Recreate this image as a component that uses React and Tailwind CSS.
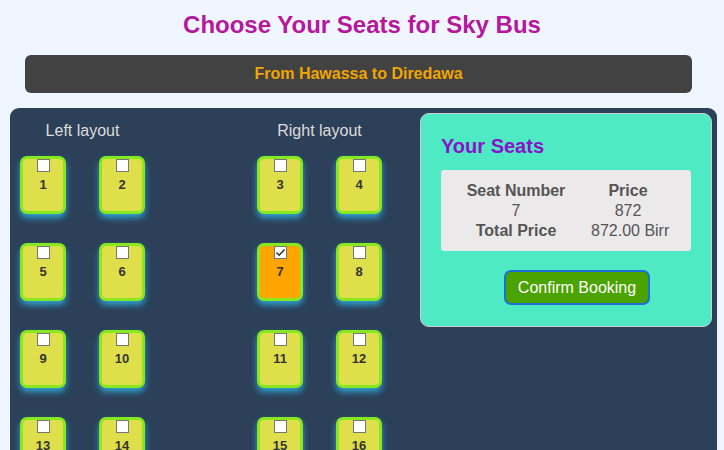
import React from "react";

const rows = [
  [1, 2, 3, 4],
  [5, 6, 7, 8],
  [9, 10, 11, 12],
  [13, 14, 15, 16],
];

// single seat card
const Seat = ({ num, selected }) => (
  <div
    className={`flex h-[58px] w-[46px] flex-col items-center rounded-[7px] border-[3px] border-[#86e81e] shadow-[0_4px_6px_rgba(47,170,220,0.9)] ${
      selected ? "bg-[#ffa500]" : "bg-[#dfdf4c]"
    }`}
  >
    <div className="flex h-[13px] w-[13px] items-center justify-center border border-[#767676] bg-white">
      {selected && (
        <svg width="11" height="11" viewBox="0 0 11 11">
          <path d="M1.5 5.5 L4.2 8.2 L9.5 2.5" fill="none" stroke="#333" strokeWidth="1.5" />
        </svg>
      )}
    </div>
    <span className="mt-[5px] text-[13px] font-bold leading-[16px] text-[#333]">{num}</span>
  </div>
);

const SeatGroup = ({ label, cols, selected }) => (
  <div className="flex w-[125px] flex-col items-center">
    <div className="text-[16px] leading-[18px] text-[#dcdcdc]">{label}</div>
    <div className="mt-[16px] grid grid-cols-[46px_46px] gap-x-[33px] gap-y-[29px]">
      {rows.map((r) =>
        cols.map((c) => <Seat key={r[c]} num={r[c]} selected={r[c] === selected} />)
      )}
    </div>
  </div>
);

export default function App() {
  return (
    <div className="min-h-screen bg-[#eff6ff] font-['Liberation_Sans',Arial,sans-serif]">
      <h1 className="pt-[11px] text-center text-[24px] font-bold leading-[28px] text-[#b5179e]">
        Choose Your Seats for Sky Bus
      </h1>
      <div className="mx-[25px] mt-[16px] flex h-[38px] w-[667px] items-center justify-center rounded-[6px] bg-[#424242]">
        <span className="text-[16px] font-bold text-[#f0a500]">From Hawassa to Diredawa</span>
      </div>
      <div className="ml-[10px] mt-[15px] flex w-[707px] rounded-t-[9px] bg-[#2c4059] pb-[20px]">
        <div className="flex w-[410px] gap-[112px] pl-[10px] pt-[14px]">
          <SeatGroup label="Left layout" cols={[0, 1]} />
          <SeatGroup label="Right layout" cols={[2, 3]} selected={7} />
        </div>
        <div className="mt-[5px] flex h-[214px] w-[292px] flex-col self-start rounded-[9px] border border-[#cfcfcf] bg-[#4deac4] px-[20px] pt-[20px]">
          <h2 className="text-[20px] font-bold leading-[24px] text-[#8a12c9]">Your Seats</h2>
          <div className="mt-[12px] rounded-[3px] bg-[#ebe9ea] pb-[10px] pt-[11px] text-[16px] leading-[20px] text-[#555]">
            <div className="grid grid-cols-[150px_74px] whitespace-nowrap text-center">
              <div className="font-bold">Seat Number</div>
              <div className="font-bold">Price</div>
              <div>7</div>
              <div>872</div>
              <div className="font-bold">Total Price</div>
              <div>872.00 Birr</div>
            </div>
          </div>
          <button className="ml-[63px] mt-[19px] h-[35px] w-[146px] rounded-[7px] border-2 border-[#1b6fd6] bg-[#4ba300] text-[16px] text-white">
            Confirm Booking
          </button>
        </div>
      </div>
    </div>
  );
}
